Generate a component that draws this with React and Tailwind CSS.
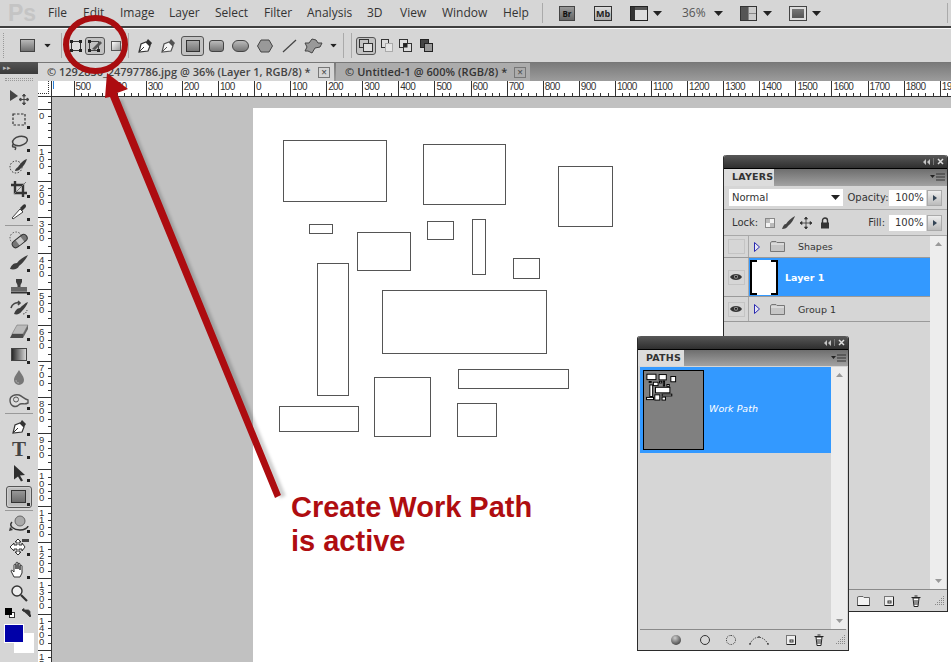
import React from "react";

const menus = [
  ["File", 35],
  ["Edit", 37],
  ["Image", 49],
  ["Layer", 46],
  ["Select", 49],
  ["Filter", 43],
  ["Analysis", 60],
  ["3D", 33],
  ["View", 42],
  ["Window", 61],
  ["Help", 39],
];

const docRects = [
  [283, 140, 104, 62],
  [423, 144, 83, 61],
  [558, 166, 55, 61],
  [309, 224, 24, 10],
  [427, 221, 27, 19],
  [472, 219, 14, 56],
  [357, 232, 54, 39],
  [513, 258, 27, 21],
  [317, 263, 32, 133],
  [382, 290, 165, 64],
  [458, 369, 111, 20],
  [374, 377, 57, 60],
  [279, 406, 80, 26],
  [457, 403, 40, 34],
];

const hLabels = [500, 400, 300, 200, 100, 0, 100, 200, 300, 400, 500, 600, 700, 800, 900, 1000, 1100, 1200, 1300, 1400, 1500, 1600, 1700, 1800, 1900];
const vLabels = ["0", "100", "200", "300", "400", "500", "600", "700", "800", "900", "1000", "1100", "1200", "1300", "1400", "1500"];

function Tri({ className = "" }) {
  return (
    <svg width="9" height="5" viewBox="0 0 9 5" className={className}>
      <path d="M0 0h9L4.5 5z" fill="#222" />
    </svg>
  );
}

function I({ w = 18, h = 18, children }) {
  return (
    <svg width={w} height={h} viewBox={`0 0 ${w} ${h}`} fill="none" className="block">
      {children}
    </svg>
  );
}

const toolIcons = {
  move: (
    <I w={24} h={18}>
      <path d="M3 2l8 6-8 5z" fill="#444" />
      <path d="M17 7v9M12.5 11.500h9M17 6l-1.500 2h3zM17 17l-1.500-2h3zM12 11.500l2-1.500v3zM22 11.500l-2-1.500v3z" stroke="#444" fill="#444" strokeWidth="1" />
    </I>
  ),
  marquee: (
    <I>
      <rect x="3" y="3" width="12" height="11" stroke="#333" strokeWidth="1.200" strokeDasharray="2.500 1.500" />
    </I>
  ),
  lasso: (
    <I w={20} h={18}>
      <ellipse cx="11" cy="7" rx="7.500" ry="4.500" stroke="#444" strokeWidth="1.500" transform="rotate(-12 11 7)" />
      <path d="M5 10c-2 1-2 3 0 3s2 1 1 3" stroke="#444" strokeWidth="1.500" />
    </I>
  ),
  quick: (
    <I w={20} h={18}>
      <circle cx="7" cy="10" r="6" stroke="#333" strokeDasharray="1.500 1.500" />
      <path d="M18 2c-4 1-7 5-9 8-2 1-3 3-3 4 3 0 5-1 6-3 3-2 5-6 6-9z" fill="#3c3c3c" />
    </I>
  ),
  crop: (
    <I>
      <path d="M5 1v12h12M1 5h12v12" stroke="#333" strokeWidth="2.400" />
      <path d="M4 14L16 2" stroke="#777" strokeWidth="1" />
    </I>
  ),
  dropper: (
    <I>
      <path d="M3 16l-1-1 8-9 3 3z" fill="#fff" stroke="#444" />
      <path d="M10 5l3-3c1-1 3-1 3 1 0 1-1 2-1 2l-3 3z" fill="#333" />
    </I>
  ),
  heal: (
    <I w={22} h={18}>
      <circle cx="8" cy="7" r="6" stroke="#555" strokeDasharray="1.500 1.500" />
      <rect x="3" y="7" width="17" height="7" rx="3.500" transform="rotate(-38 11 10)" fill="#777" stroke="#333" />
      <rect x="9" y="7" width="6" height="6" transform="rotate(-38 12 10)" fill="#c8c8c8" />
    </I>
  ),
  brush: (
    <I w={20} h={18}>
      <path d="M19 1C14 3 10 6 8 9c-4 0-6 3-7 6 4 1 8 0 9-3 3-2 7-7 9-11z" fill="#3d3d3d" />
    </I>
  ),
  stamp: (
    <I w={20} h={18}>
      <path d="M7 2h6v3l-1.500 3v2h-3V8L7 5z" fill="#3d3d3d" />
      <rect x="2" y="10" width="16" height="4" fill="#666" />
      <rect x="2" y="14.500" width="16" height="2" fill="#333" />
    </I>
  ),
  history: (
    <I w={20} h={18}>
      <path d="M19 2c-3 1-6 4-8 6-3 0-5 3-6 6 3 1 6 0 8-3 2-2 5-6 6-9z" fill="#3d3d3d" />
      <path d="M2 8c1-4 5-6 8-5M9 1l2 2-2 2" stroke="#444" strokeWidth="1.600" />
      <path d="M14 14c2 0 4-2 4-4" stroke="#555" strokeDasharray="1.500 1" />
    </I>
  ),
  eraser: (
    <I w={20} h={18}>
      <path d="M8 2h11l-5 9H3z" fill="#bbb" stroke="#666" strokeWidth=".5" />
      <path d="M3 11h11v4H1z" fill="#4a4a4a" />
      <path d="M14 11l5-9v4l-5 9z" fill="#666" />
    </I>
  ),
  gradient: (
    <I>
      <defs>
        <linearGradient id="tg" x1="0" x2="1" y1="0" y2="0">
          <stop offset="0" stopColor="#222" />
          <stop offset="1" stopColor="#ddd" />
        </linearGradient>
      </defs>
      <rect x="1.500" y="2.500" width="15" height="12" fill="url(#tg)" stroke="#444" />
    </I>
  ),
  dodge: (
    <I>
      <path d="M9 1c3 5 5 7 5 10a5 5 0 01-10 0c0-3 2-5 5-10z" fill="#777" />
      <path d="M6 11c0 2 1 3 3 3" stroke="#aaa" />
    </I>
  ),
  smudge: (
    <I w={22} h={18}>
      <path d="M2 8c0-4 5-6 9-5 3 1 5 4 9 5v3c-4 2-5 0-8 1-2 2-5 3-7 2s-3-3-3-6z" stroke="#555" strokeWidth="1.400" fill="#ddd" />
      <circle cx="8" cy="7.500" r="2.500" stroke="#555" />
    </I>
  ),
  pen: (
    <I>
      <path d="M3 15l2-8 5-2 4 4-2 5z" fill="#fff" stroke="#333" strokeWidth="1.200" />
      <path d="M3 15l5-5" stroke="#333" />
      <path d="M10 5l2-3 4 4-2 3z" fill="#333" />
    </I>
  ),
  path: (
    <I>
      <path d="M4 1l11 10-5 .5 3 5-2 1-3-5-4 3z" fill="#2e2e2e" />
    </I>
  ),
  shape: (
    <I w={16} h={14}>
      <defs>
        <linearGradient id="sg" x1="0" x2="0" y1="0" y2="1">
          <stop offset="0" stopColor="#999" />
          <stop offset="1" stopColor="#6a6a6a" />
        </linearGradient>
      </defs>
      <rect x=".5" y=".5" width="14" height="12" fill="url(#sg)" stroke="#333" />
    </I>
  ),
  rotate: (
    <I w={22} h={18}>
      <circle cx="12" cy="6" r="5" fill="#aaa" stroke="#666" />
      <path d="M4 7C0 11 6 15 12 15c4 0 8-2 8-4" stroke="#333" strokeWidth="1.500" />
      <path d="M2 12l3 3-4 1z" fill="#333" />
    </I>
  ),
  pan: (
    <I w={22} h={18}>
      <path d="M10 1l3 3h-2v3h3V5l3 4-3 4v-2h-3v3h2l-3 3-3-3h2v-3H6v2L2 9l4-4v2h3V4H7z" fill="#fff" stroke="#333" />
      <rect x="14" y="1" width="7" height="3" fill="#444" />
    </I>
  ),
  hand: (
    <I>
      <path d="M4 16l-3-6c0-1 1-1 2 0l1 1V4c0-1 2-1 2 0v4V2c0-1 2-1 2 0v6V3c0-1 2-1 2 0v6V5c0-1 2-1 2 0v7l-2 4z" fill="#fff" stroke="#333" />
    </I>
  ),
  zoom: (
    <I>
      <circle cx="7" cy="7" r="5" fill="#eee" stroke="#333" strokeWidth="1.400" />
      <path d="M11 11l6 6" stroke="#333" strokeWidth="2.200" />
    </I>
  ),
};

function Tool({ name, corner = true }) {
  return (
    <div className="relative w-[38px] h-[23px] flex items-center justify-center">
      {toolIcons[name]}
      {corner && <span className="absolute right-[8px] bottom-[2px] w-[3px] h-[3px] bg-[#222]" />}
    </div>
  );
}

function ToolSep({ h = "h-[5px]" }) {
  return (
    <div className={`${h} flex items-center justify-center`}>
      <div className="w-[28px] h-px bg-[#999]" />
    </div>
  );
}

function Toolbox() {
  return (
    <div className="w-[38px] shrink-0 bg-[#d6d6d6] flex flex-col h-full">
      <div className="h-[12px] bg-gradient-to-b from-[#555] to-[#3b3b3b] text-[#bbb] text-[7px] leading-[12px] pl-[3px]">▸▸</div>
      <div className="h-[11px] flex items-center justify-center">
        <div className="w-[28px] h-[3px] border-y border-dotted border-[#999]" />
      </div>
      <Tool name="move" corner={false} />
      <Tool name="marquee" />
      <Tool name="lasso" />
      <Tool name="quick" />
      <Tool name="crop" />
      <Tool name="dropper" />
      <ToolSep />
      <Tool name="heal" />
      <Tool name="brush" />
      <Tool name="stamp" />
      <Tool name="history" />
      <Tool name="eraser" />
      <Tool name="gradient" />
      <Tool name="dodge" corner={false} />
      <Tool name="smudge" />
      <ToolSep h="h-[3px]" />
      <Tool name="pen" />
      <div className="relative w-[38px] h-[23px] flex items-center justify-center font-['Liberation_Serif',serif] font-bold text-[21px] leading-none text-[#444]">
        T
        <span className="absolute right-[8px] bottom-[2px] w-[3px] h-[3px] bg-[#222]" />
      </div>
      <Tool name="path" />
      <div className="relative mt-[2px] mx-[6px] w-[26px] h-[22px] rounded-[3px] border border-[#555] bg-[#bdbdbd] flex items-center justify-center shadow-[inset_0_0_2px_#fff]">
        {toolIcons.shape}
        <span className="absolute right-[1px] bottom-[1px] w-[3px] h-[3px] bg-[#222]" />
      </div>
      <ToolSep h="h-[4px]" />
      <Tool name="rotate" />
      <Tool name="pan" />
      <Tool name="hand" />
      <Tool name="zoom" corner={false} />
      <div className="h-[20px] pl-[5px] pt-[4px] flex items-start gap-[6px]">
        <div className="relative w-[10px] h-[10px]">
          <div className="absolute right-0 bottom-0 w-[6px] h-[6px] bg-white border border-[#333]" />
          <div className="absolute left-0 top-0 w-[7px] h-[7px] bg-black" />
        </div>
        <svg width="10" height="10" viewBox="0 0 10 10" fill="none">
          <path d="M1 2h6c1 0 2 1 2 2v5M1 2l2-1.500v3zM9 9l-1.500-2h3z" stroke="#333" fill="#333" strokeWidth=".8" />
        </svg>
      </div>
      <div className="relative h-[30px]">
        <div className="absolute left-[14px] top-[9px] w-[20px] h-[20px] bg-white" />
        <div className="absolute left-[4px] top-0 w-[20px] h-[19px] bg-[#0000a8] border border-white" />
      </div>
    </div>
  );
}

function OptionsBar() {
  return (
    <div className="h-[34px] bg-[#d6d6d6] flex items-center border-t border-[#fafafa] shrink-0">
      <div className="w-[8px] ml-[3px] h-[25px] border-l border-dotted border-[#999]" />
      <div className="ml-[9px]">
        <svg width="15" height="13" viewBox="0 0 15 13">
          <defs>
            <linearGradient id="og" x1="0" x2="0" y1="0" y2="1">
              <stop offset="0" stopColor="#bbb" />
              <stop offset="1" stopColor="#6d6d6d" />
            </linearGradient>
          </defs>
          <rect x=".5" y=".5" width="14" height="12" fill="url(#og)" stroke="#444" />
        </svg>
      </div>
      <Tri className="ml-[8px] scale-75" />
      <div className="ml-[9px] w-px h-[25px] bg-[#aaa]" />
      <div className="ml-[8px]">
        <svg width="12" height="12" viewBox="0 0 12 12" fill="none">
          <rect x="1.500" y="1.500" width="9" height="9" stroke="#333" fill="#ddd" />
          <g fill="#222">
            <rect x="0" y="0" width="3" height="3" />
            <rect x="9" y="0" width="3" height="3" />
            <rect x="0" y="9" width="3" height="3" />
            <rect x="9" y="9" width="3" height="3" />
          </g>
        </svg>
      </div>
      <div className="ml-[3px] w-[20px] h-[18px] rounded-[3px] border border-[#555] bg-[#c2c2c2] flex items-center justify-center">
        <svg width="15" height="14" viewBox="0 0 15 14" fill="none">
          <rect x="1.500" y="2.500" width="9" height="9" stroke="#444" />
          <path d="M4 10l8-8 2 2-7 7z" fill="#555" />
          <g fill="#222">
            <rect x="0" y="10" width="3" height="3" />
            <rect x="9" y="10" width="3" height="3" />
            <rect x="0" y="1" width="3" height="3" />
          </g>
        </svg>
      </div>
      <div className="ml-[6px] w-[10px] h-[10px] border border-[#555] bg-gradient-to-br from-white to-[#999]" />
      <div className="ml-[7px] w-px h-[25px] bg-[#aaa]" />
      <div className="ml-[7px]">{toolIcons.pen}</div>
      <div className="ml-[5px] opacity-80">{toolIcons.pen}</div>
      <div className="ml-[4px] w-[23px] h-[20px] rounded-[3px] border border-[#555] bg-[#c2c2c2] flex items-center justify-center">
        <div className="w-[14px] h-[12px] border border-[#333] bg-gradient-to-b from-[#aaa] to-[#777]" />
      </div>
      <div className="ml-[5px] w-[15px] h-[12px] rounded-[3px] border border-[#444] bg-gradient-to-b from-[#bbb] to-[#777]" />
      <div className="ml-[8px] w-[17px] h-[12px] rounded-full border border-[#444] bg-gradient-to-b from-[#bbb] to-[#777]" />
      <svg width="16" height="14" viewBox="0 0 16 14" className="ml-[8px]">
        <path d="M4 1h8l3.500 6L12 13H4L.5 7z" fill="#999" stroke="#444" />
      </svg>
      <svg width="15" height="14" viewBox="0 0 15 14" className="ml-[9px]">
        <path d="M1 13L14 1" stroke="#444" strokeWidth="1.200" />
      </svg>
      <svg width="19" height="16" viewBox="0 0 19 16" className="ml-[7px]">
        <path d="M8 1l4 1 2 3 4 0-2 4-5 1-3 5-4-2-3 0 2-4-2-4 4 0z" fill="#999" stroke="#444" />
      </svg>
      <Tri className="ml-[6px] scale-75" />
      <div className="ml-[5px] w-px h-[25px] bg-[#aaa]" />
      <div className="ml-[7px] w-px h-[25px] bg-[#aaa]" />
      <div className="ml-[4px] w-[20px] h-[18px] rounded-[3px] border border-[#555] bg-[#c2c2c2] flex items-center justify-center">
        <svg width="14" height="13" viewBox="0 0 14 13" fill="none">
          <rect x=".5" y=".5" width="9" height="8" stroke="#333" />
          <rect x="4.500" y="4.500" width="9" height="8" stroke="#333" fill="#ddd" />
        </svg>
      </div>
      <svg width="12" height="13" viewBox="0 0 12 13" fill="none" className="ml-[5px]">
        <rect x=".5" y=".5" width="7" height="8" stroke="#333" fill="#ddd" />
        <rect x="4.500" y="4.500" width="7" height="8" stroke="#aaa" fill="#e5e5e5" />
      </svg>
      <svg width="13" height="13" viewBox="0 0 13 13" fill="none" className="ml-[6px]">
        <rect x=".5" y=".5" width="8" height="8" stroke="#333" fill="#ddd" />
        <rect x="4.500" y="4.500" width="8" height="8" stroke="#333" fill="#ddd" />
        <rect x="4.500" y="4.500" width="4" height="4" fill="#222" />
      </svg>
      <svg width="13" height="13" viewBox="0 0 13 13" fill="none" className="ml-[8px]">
        <rect x=".5" y=".5" width="8" height="8" fill="#444" stroke="#222" />
        <rect x="4.500" y="4.500" width="8" height="8" fill="#999" stroke="#222" />
      </svg>
    </div>
  );
}

function MenuBar() {
  return (
    <div className="h-[28px] bg-[#d6d6d6] flex items-center border-b-2 border-[#3f3f3f] shrink-0 text-[12px] text-[#333]">
      <div className="w-[43px] pl-[8px] text-[23px] leading-none font-['Liberation_Sans',sans-serif] font-bold text-[#c4c4c4]">Ps</div>
      <div className="pl-[5px] flex">
        {menus.map(([label, w]) => (
          <div key={label} style={{ width: w }}>{label}</div>
        ))}
      </div>
      <div className="w-px h-[20px] bg-[#aaa]" />
      <div className="ml-[16px] w-[16px] h-[15px] bg-gradient-to-b from-[#999] to-[#666] border border-[#444] text-[8px] font-bold leading-[13px] text-center text-[#111]">Br</div>
      <div className="ml-[19px] w-[18px] h-[15px] bg-gradient-to-b from-[#ddd] to-[#aaa] border border-[#333] text-[9px] font-bold leading-[13px] text-center text-[#222]">Mb</div>
      <div className="ml-[18px] w-[18px] h-[15px] border border-[#222] bg-[#ddd] flex">
        <div className="w-[4px] h-full bg-[#333]" />
        <div className="flex-1 border-t-[3px] border-[#555]" />
      </div>
      <Tri className="ml-[5px]" />
      <div className="ml-[20px] w-[23px] text-[#555]">36%</div>
      <Tri className="ml-[9px]" />
      <div className="ml-[17px] w-[17px] h-[15px] border border-[#333] bg-[#888] grid grid-cols-2 gap-px">
        <div className="bg-[#555] row-span-2" />
        <div className="bg-[#ccc]" />
        <div className="bg-[#ccc]" />
      </div>
      <Tri className="ml-[6px]" />
      <div className="ml-[17px] w-[18px] h-[15px] p-[2px] border border-[#444] bg-[#ddd]">
        <div className="w-full h-full bg-gradient-to-b from-[#777] to-[#555]" />
      </div>
      <Tri className="ml-[5px]" />
      <div className="ml-[126px] w-px h-[20px] bg-[#aaa]" />
    </div>
  );
}

function CloseBox() {
  return (
    <div className="w-[12px] h-[11px] border border-[#777] flex items-center justify-center text-[10px] leading-none text-[#555]">×</div>
  );
}

function TabBar() {
  return (
    <div className="h-[19px] flex bg-gradient-to-b from-[#7a7a7a] to-[#9c9c9c] shrink-0 border-t border-[#777] text-[11px] font-semibold">
      <div className="w-[296px] pl-[9px] pr-[4px] bg-[#d6d6d6] flex items-center justify-between text-[#444]">
        <span>© 1292830_24797786.jpg @ 36% (Layer 1, RGB/8) *</span>
        <CloseBox />
      </div>
      <div className="ml-[2px] w-[194px] pl-[9px] pr-[4px] bg-[#acacac] flex items-center justify-between text-[#333]">
        <span className="tracking-[0.06px]">© Untitled-1 @ 600% (RGB/8) *</span>
        <CloseBox />
      </div>
    </div>
  );
}

function HRuler() {
  return (
    <div className="h-[16px] bg-white flex overflow-hidden border-b border-[#333] shrink-0 font-['Liberation_Sans',sans-serif] text-[10px] leading-[11px] text-[#333]">
      <div className="relative w-[14px] shrink-0 border-r border-[#333]">
        <div className="absolute left-0 right-[2px] top-[12px] border-t border-dotted border-[#333]" />
        <div className="absolute right-[2px] top-0 bottom-[2px] border-l border-dotted border-[#333]" />
      </div>
      <div className="w-[21.5px] shrink-0 relative">
        <div className="absolute left-[1px] top-0 h-[8px] w-px bg-[#2b7fd6]" />
      </div>
      {hLabels.map((label, i) => (
        <div key={i} className="w-[36.1px] shrink-0 h-full border-l border-[#333] flex flex-col pl-px tracking-[-0.6px]">
          <span className="flex-1">{label}</span>
          <div className="h-[3px] flex justify-evenly -ml-px">
            {[0, 1, 2, 3].map((t) => (
              <span key={t} className="w-px bg-[#333]" />
            ))}
          </div>
        </div>
      ))}
    </div>
  );
}

function VRuler() {
  return (
    <div className="w-[14px] shrink-0 bg-white border-r border-[#333] flex flex-col overflow-hidden font-['Liberation_Sans',sans-serif] text-[9.500px] leading-[7.200px] text-[#333]">
      <div className="h-[11.500px] shrink-0 flex flex-col items-end justify-evenly">
        <span className="h-px w-[3px] bg-[#333]" />
      </div>
      {vLabels.map((label) => (
        <div key={label} className="h-[36.1px] shrink-0 border-t border-[#333] flex overflow-hidden">
          <div className="w-[10px] pl-[1px] pt-[2px]">
            <div className="w-[6px] break-all">{label}</div>
          </div>
          <div className="flex-1 flex flex-col justify-evenly items-end">
            {[0, 1, 2, 3].map((t) => (
              <span key={t} className="h-px w-[3px] bg-[#333]" />
            ))}
          </div>
        </div>
      ))}
    </div>
  );
}

function Canvas() {
  return (
    <div className="flex-1 bg-[#c1c1c1] pl-[201px] pt-[11px] overflow-hidden">
      <div className="relative w-full h-full bg-white">
        {docRects.map(([x, y, w, h]) => (
          <div
            key={`${x}-${y}`}
            className="absolute border border-[#555]"
            style={{ left: x - 253, top: y - 108, width: w, height: h }}
          />
        ))}
      </div>
    </div>
  );
}

function PanelHeader({ title, tabW, rowH }) {
  return (
    <>
      <div className="h-[13px] rounded-t-[3px] bg-gradient-to-b from-[#585858] to-[#2f2f2f] flex items-center justify-end pr-[3px] gap-[3px] text-[#ccc] shrink-0">
        <svg width="7" height="6" viewBox="0 0 7 6">
          <path d="M3 0v6L0 3zM7 0v6L4 3z" fill="#c4c4c4" />
        </svg>
        <span className="w-px h-[7px] bg-[#777]" />
        <svg width="7" height="7" viewBox="0 0 7 7">
          <path d="M1 1l5 5M6 1L1 6" stroke="#ddd" strokeWidth="1.500" />
        </svg>
      </div>
      <div
        className="bg-gradient-to-b from-[#6e6e6e] to-[#a2a2a2] flex items-end justify-between pr-[2px] shrink-0 border-t border-black"
        style={{ height: rowH }}
      >
        <div
          className="h-full bg-[#dcdcdc] text-[9.500px] font-bold text-[#333] flex items-center pl-[8px] tracking-[0.2px]"
          style={{ width: tabW }}
        >
          {title}
        </div>
        <div className="h-full flex items-center">
          <svg width="15" height="9" viewBox="0 0 15 9">
            <path d="M0 2h5L2.500 5z" fill="#222" />
            <path d="M6 1h9M6 4h9M6 7h9" stroke="#333" />
          </svg>
        </div>
      </div>
    </>
  );
}

function Scrollbar() {
  return (
    <div className="w-[16px] shrink-0 bg-[#ededed] flex flex-col justify-between items-center py-[6px]">
      <svg width="7" height="4" viewBox="0 0 7 4"><path d="M3.500 0L7 4H0z" fill="#999" /></svg>
      <svg width="7" height="4" viewBox="0 0 7 4"><path d="M0 0h7L3.500 4z" fill="#999" /></svg>
    </div>
  );
}

function Grip() {
  const dots = [[8, 0], [6, 2], [8, 2], [4, 4], [6, 4], [8, 4], [2, 6], [4, 6], [6, 6], [8, 6], [0, 8], [2, 8], [4, 8], [6, 8], [8, 8]];
  return (
    <svg width="10" height="10" viewBox="0 0 10 10">
      {dots.map(([x, y]) => (
        <rect key={`${x}-${y}`} x={x} y={y} width="1" height="1" fill="#888" />
      ))}
    </svg>
  );
}

function Trash() {
  return (
    <svg width="10" height="12" viewBox="0 0 10 12" fill="none">
      <path d="M2 3h6l-1 8.500H3z" fill="#fff" stroke="#222" />
      <path d="M.5 2.500h9M3.500 1h3M4 5v5M6 5v5" stroke="#222" />
    </svg>
  );
}

function NewPage() {
  return (
    <svg width="10" height="10" viewBox="0 0 10 10" fill="none">
      <rect x=".5" y=".5" width="9" height="9" fill="#eee" stroke="#777" />
      <path d="M1 9.500h8.500V1" stroke="#222" />
      <rect x="4" y="5" width="3" height="2" stroke="#333" />
    </svg>
  );
}

function Folder() {
  return (
    <svg width="15" height="11" viewBox="0 0 15 11" fill="none">
      <path d="M.5 1.500L2 .5h4l1 1h7.500v9H.5z" fill="#c6c6c6" stroke="#777" />
      <path d="M1 3h13" stroke="#eee" />
    </svg>
  );
}

function NewGroup() {
  return (
    <svg width="13" height="10" viewBox="0 0 13 10" fill="none">
      <path d="M.5 1L2 .5h4l1 1h5.500v8H.5z" fill="#f2f2f2" stroke="#666" />
      <path d="M.5 9.500h12" stroke="#111" />
    </svg>
  );
}

function SmallTri() {
  return (
    <svg width="6" height="10" viewBox="0 0 6 10">
      <path d="M.5 .5L5.500 5 .5 9.500z" fill="#e6e6f4" stroke="#2a2ab0" />
    </svg>
  );
}

function Eye() {
  return (
    <svg width="12" height="8" viewBox="0 0 12 8">
      <path d="M0 4c2-4 10-4 12 0-2 4-10 4-12 0z" fill="#333" />
      <circle cx="6" cy="3.800" r="2" fill="#999" />
      <circle cx="6" cy="3.800" r="1" fill="#111" />
    </svg>
  );
}

function StepBtn() {
  return (
    <div className="w-[15px] h-[16px] ml-px bg-gradient-to-b from-[#eee] to-[#bbb] border border-[#aaa] flex items-center justify-center">
      <svg width="4" height="6" viewBox="0 0 4 6"><path d="M0 0l4 3-4 3z" fill="#345" /></svg>
    </div>
  );
}

function EyeCell({ visible }) {
  return (
    <div className="w-[25px] bg-[#d6d6d6] border-r border-[#aaa] flex items-center justify-center">
      <div className="w-[17px] h-[15px] border border-[#c4c4c4] flex items-center justify-center">
        {visible && <Eye />}
      </div>
    </div>
  );
}

function LayerRow({ visible, name, h }) {
  return (
    <div className="flex border-b border-[#9a9a9a] items-stretch" style={{ height: h }}>
      <EyeCell visible={visible} />
      <div className="pl-[5px] flex items-center">
        <SmallTri />
        <div className="ml-[10px]"><Folder /></div>
        <span className="ml-[13px] pt-[2px]">{name}</span>
      </div>
    </div>
  );
}

function LayersPanel() {
  return (
    <div className="absolute left-[723px] top-[155px] w-[225px] h-[457px] bg-[#d6d6d6] border-x border-b border-[#2b2b2b] rounded-t-[3px] flex flex-col text-[9.500px] text-[#333] font-['DejaVu_Sans',sans-serif]">
      <PanelHeader title="LAYERS" tabW={50} rowH={18} />
      <div className="h-[24px] flex items-center pl-[5px] pr-[5px] border-b border-[#a8a8a8] text-[10px]">
        <div className="w-[115px] h-[17px] bg-white flex items-center justify-between pl-[3px] pr-[3px]">
          Normal
          <Tri />
        </div>
        <span className="ml-[4px] w-[42px]">Opacity:</span>
        <div className="w-[37px] h-[16px] bg-white flex items-center pl-[6px]">100%</div>
        <StepBtn />
      </div>
      <div className="h-[26px] flex items-center pl-[8px] pr-[5px] border-b border-[#a8a8a8] text-[10px]">
        <span className="w-[33px]">Lock:</span>
        <svg width="10" height="10" viewBox="0 0 10 10">
          <rect width="10" height="10" fill="#f2f2f2" />
          <rect width="5" height="5" fill="#bbb" />
          <rect x="5" y="5" width="5" height="5" fill="#bbb" />
          <rect x=".5" y=".5" width="9" height="9" fill="none" stroke="#888" />
        </svg>
        <svg width="14" height="13" viewBox="0 0 14 13" className="ml-[6px]">
          <path d="M14 0C10 2 7 5 5 8c-2 0-3 2-4 5 3 0 5-1 6-3 3-2 6-7 7-10z" fill="#444" />
        </svg>
        <svg width="12" height="12" viewBox="0 0 12 12" className="ml-[5px]">
          <path d="M6 0v12M0 6h12M6 0L4.500 2h3zM6 12l-1.500-2h3zM0 6l2-1.500v3zM12 6l-2-1.500v3z" stroke="#333" strokeWidth=".8" fill="#333" />
        </svg>
        <svg width="10" height="12" viewBox="0 0 10 12" className="ml-[8px]" fill="none">
          <path d="M2.500 6V3.500a2.500 2.500 0 015 0V6" stroke="#333" strokeWidth="1.400" />
          <rect x="1" y="5.500" width="8" height="6" fill="#333" />
        </svg>
        <span className="ml-auto mr-[4px]">Fill:</span>
        <div className="w-[37px] h-[16px] bg-white flex items-center pl-[6px]">100%</div>
        <StepBtn />
      </div>
      <div className="flex flex-1 pr-px">
        <div className="flex-1 flex flex-col">
          <LayerRow name="Shapes" h={22} />
          <div className="h-[39px] flex bg-[#3399ff] border-b border-[#9a9a9a]">
            <EyeCell visible />
            <svg width="28" height="35" viewBox="0 0 28 35" fill="none" className="ml-px my-[2px]">
              <rect width="28" height="35" fill="#000" />
              <rect x="2" y="2" width="24" height="31" fill="#fff" />
              <rect x="7" y="0" width="14" height="2" fill="#fff" />
              <rect x="7" y="33" width="14" height="2" fill="#fff" />
            </svg>
            <span className="ml-[7px] pt-[3px] self-center font-bold text-white">Layer 1</span>
          </div>
          <LayerRow visible name="Group 1" h={25} />
        </div>
        <Scrollbar />
      </div>
      <div className="h-[22px] border-t border-[#8a8a8a] flex items-center pr-[2px]">
        <div className="ml-[133px]"><NewGroup /></div>
        <div className="ml-[14px]"><NewPage /></div>
        <div className="ml-[17px]"><Trash /></div>
        <div className="ml-auto"><Grip /></div>
      </div>
    </div>
  );
}

function PathsPanel() {
  return (
    <div className="absolute left-[637px] top-[336px] w-[212px] h-[315px] bg-[#d6d6d6] border-x border-b border-[#2b2b2b] rounded-t-[3px] flex flex-col font-['DejaVu_Sans',sans-serif]">
      <PanelHeader title="PATHS" tabW={46} rowH={17} />
      <div className="flex flex-1 pl-[2px] pr-px pt-px">
        <div className="flex-1">
          <div className="h-[86px] bg-[#3399ff] flex items-center pl-[3px]">
            <svg width="61" height="80" viewBox="0 0 61 80" className="bg-[#808080] border border-black">
              {docRects.map(([x, y, w, h]) => (
                <rect
                  key={`${x}-${y}`}
                  x={(x - 283) * 0.09 + 3}
                  y={(y - 140) * 0.09 + 3}
                  width={w * 0.09}
                  height={h * 0.09}
                  fill="#fff"
                  stroke="#000"
                  strokeWidth="1"
                />
              ))}
            </svg>
            <span className="ml-[5px] -mt-[2px] text-[9.500px] italic text-white">Work Path</span>
          </div>
        </div>
        <Scrollbar />
      </div>
      <div className="h-[21px] mx-[2px] border-t border-[#8a8a8a] flex items-center shrink-0">
        <div className="ml-[31px] w-[10px] h-[10px] rounded-full bg-[radial-gradient(circle_at_40%_30%,#ccc,#222)]" />
        <div className="ml-[19px] w-[10px] h-[10px] rounded-full border border-[#333]" />
        <div className="ml-[16px] w-[10px] h-[10px] rounded-full border border-dotted border-[#333]" />
        <svg width="20" height="10" viewBox="0 0 20 10" className="ml-[13px]" fill="none">
          <path d="M1 9C5 0 14 0 19 9" stroke="#555" strokeDasharray="1.500 1" />
          <path d="M0 9h2M18 9h2M9 2h2" stroke="#222" />
        </svg>
        <div className="ml-[17px]"><NewPage /></div>
        <div className="ml-[18px]"><Trash /></div>
        <div className="ml-auto"><Grip /></div>
      </div>
    </div>
  );
}

function Annotation() {
  return (
    <>
      <svg width="951" height="662" viewBox="0 0 951 662" className="absolute inset-0 pointer-events-none" fill="none">
        <path d="M119 100L283 497" stroke="#000" strokeOpacity=".18" strokeWidth="6" className="blur-[1.5px]" />
        <ellipse cx="95.500" cy="44.500" rx="29.500" ry="26.500" stroke="#a90d10" strokeWidth="6" />
        <path d="M107 73L128 89 117 93 281 495 275 498 110 97 105 98z" fill="#ad0c10" />
      </svg>
      <div className="absolute left-[291px] top-[490px] font-['Liberation_Sans',sans-serif] font-bold text-[29px] leading-[34px] text-[#af0d10]">
        Create Work Path
        <br />
        is active
      </div>
    </>
  );
}

export default function App() {
  return (
    <div className="relative w-[951px] h-[662px] overflow-hidden flex flex-col bg-[#d6d6d6] font-['Open_Sans',sans-serif]">
      <MenuBar />
      <OptionsBar />
      <div className="flex flex-1 min-h-0">
        <Toolbox />
        <div className="flex-1 min-w-0 flex flex-col">
          <TabBar />
          <HRuler />
          <div className="flex flex-1 min-h-0">
            <VRuler />
            <Canvas />
          </div>
        </div>
      </div>
      <LayersPanel />
      <PathsPanel />
      <Annotation />
    </div>
  );
}
